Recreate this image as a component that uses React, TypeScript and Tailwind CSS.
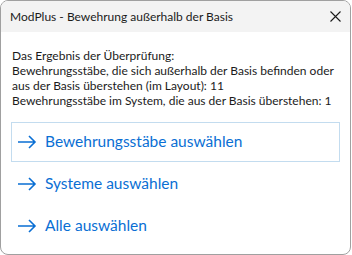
import React from "react";

const actions = [
  "Bewehrungsstäbe auswählen",
  "Systeme auswählen",
  "Alle auswählen",
];

function Arrow() {
  return (
    <svg width="20" height="14" viewBox="0 0 20 14" fill="none" stroke="#0a6fd4" strokeWidth="1.6">
      <path d="M1 7h17M12 1l6 6-6 6" />
    </svg>
  );
}

export default function App() {
  return (
    <div className="h-[255px] w-[352px] bg-white" style={{ fontFamily: 'Lato, "Noto Sans", sans-serif' }}>
      <div className="flex h-[255px] w-[351px] flex-col overflow-hidden rounded-[8px] border border-[#a0a0a0] bg-white">
        <div className="flex h-[31px] shrink-0 items-center justify-between bg-[#f3f3f3] pl-[9px] pr-[9px] text-[12px] text-[#1b1b1b]">
          <span className="whitespace-nowrap">ModPlus - Bewehrung außerhalb der Basis</span>
          <svg width="11" height="11" viewBox="0 0 11 11" stroke="#1b1b1b" strokeWidth="1.1">
            <path d="M0.5 0.5l10 10M10.5 0.5l-10 10" />
          </svg>
        </div>
        <div className="whitespace-nowrap px-[11px] pt-[16px] text-[12px] leading-[15px] text-[#1b1b1b]">
          <p>Das Ergebnis der Überprüfung:</p>
          <p>Bewehrungsstäbe, die sich außerhalb der Basis befinden oder</p>
          <p>aus der Basis überstehen (im Layout): 11</p>
          <p>Bewehrungsstäbe im System, die aus der Basis überstehen: 1</p>
        </div>
        <div className="mt-[14px] flex flex-col gap-[2px] px-[10px]">
          {actions.map((label, i) => (
            <div
              key={label}
              className={`flex h-[40px] items-center gap-[8px] whitespace-nowrap border pl-[5px] text-[15.5px] text-[#0a6fd4] ${
                i === 0 ? "border-[#c3dcef]" : "border-transparent"
              }`}
            >
              <Arrow />
              <span>{label}</span>
            </div>
          ))}
        </div>
      </div>
    </div>
  );
}
